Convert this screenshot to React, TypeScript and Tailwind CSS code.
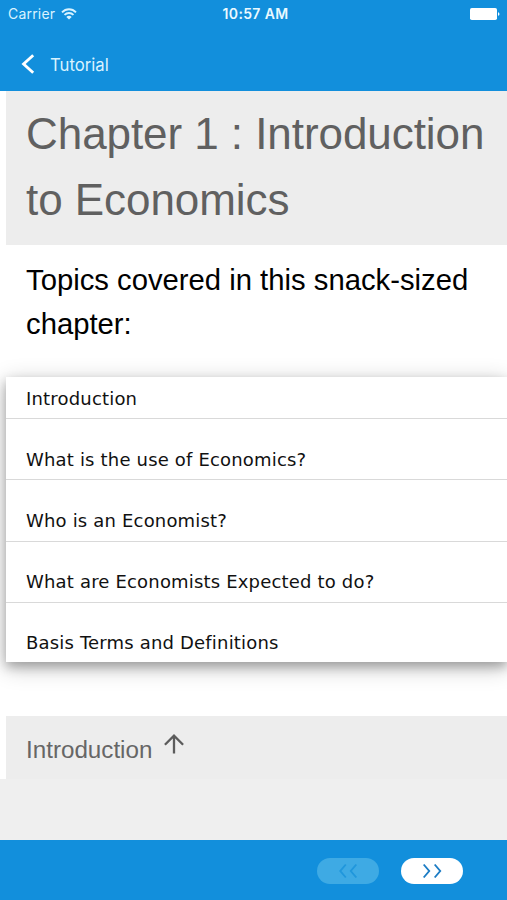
import React from 'react';

interface TopicRowProps {
  title: string;
  size: string;
}

const topics = [
  { title: 'Introduction', size: 'h-[42px] pb-[7px]' },
  { title: 'What is the use of Economics?', size: 'h-[61px] pb-[7px]' },
  { title: 'Who is an Economist?', size: 'h-[62px] pb-[8px]' },
  { title: 'What are Economists Expected to do?', size: 'h-[61px] pb-[8px]' },
  { title: 'Basis Terms and Definitions', size: 'h-[59px] pb-[7px]' },
];

const StatusBar: React.FC = () => (
  <div className="grid grid-cols-3 items-center h-7 pl-2 pr-[7px] text-[#d9f3ff]">
    <div className="flex items-center gap-[6px]">
      <span className="text-[14px] leading-7 tracking-[0.2px]">Carrier</span>
      <svg width="16" height="12" viewBox="0 0 16 12" fill="none" stroke="currentColor" strokeWidth="1.9">
        <path d="M1 4.3C5 .2 11 .2 15 4.3" />
        <path d="M3.5 6.9c2.6-2.6 6.4-2.6 9 0" />
        <path d="M8 11.6 5.3 8.9c1.5-1.5 3.9-1.5 5.4 0Z" fill="currentColor" stroke="none" />
      </svg>
    </div>
    <span className="pl-[3px] text-[14px] leading-7 tracking-[0.35px] font-semibold text-center whitespace-nowrap text-[#e9f9ff]">10:57 AM</span>
    <svg className="justify-self-end" width="30" height="12" viewBox="0 0 30 12" fill="#fff">
      <rect x="0" y="0" width="27" height="12" rx="1.8" />
      <path d="M28 4.2c1.9.4 1.9 3.2 0 3.6Z" />
    </svg>
  </div>
);

const TopicRow: React.FC<TopicRowProps> = ({ title, size }) => (
  <li className={`${size} flex items-end pl-5 border-b border-[#d9d9d9] last:border-b-0`}>
    <span className="font-['DejaVu_Sans',sans-serif] text-[18px] leading-[24px] tracking-[0.18px] text-[#111] whitespace-nowrap">{title}</span>
  </li>
);

const App: React.FC = () => {
  return (
    <div className="w-full h-[900px] flex flex-col overflow-hidden bg-[#efefef] font-['Liberation_Sans',Arial,sans-serif]">
      <header className="h-[91px] shrink-0 bg-[#128fdc] font-['Inter',sans-serif]">
        <StatusBar />
        <div className="flex items-center gap-[14px] h-[63px] pl-[21px] pt-[11px]">
          <svg className="-mt-[3px]" width="15" height="20" viewBox="0 0 15 20" fill="none" stroke="#fff" strokeWidth="2.9">
            <path d="M12.2 1.2 2.6 10l9.6 8.8" />
          </svg>
          <span className="pt-[2px] text-[16.7px] text-[#d9f3ff]">Tutorial</span>
        </div>
      </header>

      <main className="h-[688px] shrink-0 bg-white pl-[6px]">
        <h1 className="h-[154px] pl-5 pt-[10px] bg-[#ededed] text-[44px] leading-[66px] tracking-[-0.06px] text-[#606060]">
          <span className="whitespace-nowrap">Chapter 1 : Introduction</span>
          <br />
          to Economics
        </h1>

        <p className="h-[132px] pl-5 pt-[13px] text-[29.25px] leading-[44px] text-black">
          Topics covered in this snack-sized
          <br />
          chapter:
        </p>

        <ul className="h-[285px] bg-white shadow-[0_5px_10px_rgba(0,0,0,0.25),0_5px_22px_rgba(0,0,0,0.24)]">
          {topics.map(topic => (
            <TopicRow key={topic.title} title={topic.title} size={topic.size} />
          ))}
        </ul>

        <h2 className="mt-[54px] h-[63px] pl-5 flex items-center gap-3 bg-[#ededed] text-[24.2px] text-[#666]">
          <span className="pt-[6px]">Introduction</span>
          <svg className="mb-[7px]" width="20" height="20" viewBox="0 0 20 20" fill="none" stroke="#5c5c5c" strokeWidth="2.3">
            <path d="M10 19.5V1.8M.9 10.8 10 1.7l9.1 9.1" />
          </svg>
        </h2>
      </main>

      <footer className="mt-auto h-[60px] shrink-0 flex items-center justify-end gap-[22px] pr-11 pt-[2px] bg-[#128fdc]">
        <button disabled className="w-[62px] h-[26px] rounded-full flex items-center justify-center bg-[#3eaae4]">
          <svg width="20" height="16" viewBox="0 0 20 16" fill="none" stroke="#2097dc" strokeWidth="1.9">
            <path d="M7.8 1.5 2.3 8l5.5 6.5M18.3 1.5 12.8 8l5.5 6.5" />
          </svg>
        </button>
        <button className="w-[62px] h-[26px] rounded-full flex items-center justify-center bg-white">
          <svg width="20" height="16" viewBox="0 0 20 16" fill="none" stroke="#1c7cc4" strokeWidth="1.9">
            <path d="M1.7 1.5 7.2 8l-5.5 6.5M12.7 1.5 18.2 8l-5.5 6.5" />
          </svg>
        </button>
      </footer>
    </div>
  );
};

export default App;
